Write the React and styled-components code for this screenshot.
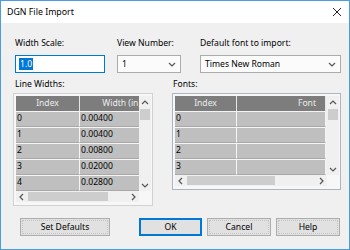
import React from 'react';
import styled, { createGlobalStyle } from 'styled-components';

const GlobalStyle = createGlobalStyle`
	html, body {
		margin: 0;
		padding: 0;
		background: #ffffff;
	}
	* {
		box-sizing: border-box;
	}
`;

const lineWidths = ['0.00400', '0.00400', '0.00800', '0.02000', '0.02800'];
const fontRows = ['0', '1', '2', '3'];

function Chevron({ dir = 'down', size = 8 }) {
	const pts = {
		down: '1,3 4,6 7,3',
		up: '1,5 4,2 7,5',
		left: '5,1 2,4 5,7',
		right: '3,1 6,4 3,7'
	}[dir];
	return (
		<svg width={size} height={size} viewBox='0 0 8 8'>
			<polyline points={pts} fill='none' stroke='#555' strokeWidth='1.2' />
		</svg>
	);
}

function App() {
	return (
		<>
			<GlobalStyle />
			<Window>
				<TitleBar>
					<Title>DGN File Import</Title>
					<svg width='10' height='10' viewBox='0 0 10 10'>
						<path d='M1 1 L9 9 M9 1 L1 9' stroke='#222' strokeWidth='1' />
					</svg>
				</TitleBar>
				<Body>
					<TopRow>
						<Field $width={90}>
							<Label>Width Scale:</Label>
							<TextInput>
								<Selected>1.0</Selected>
							</TextInput>
						</Field>
						<Field $width={64} $gap={12}>
							<Label>View Number:</Label>
							<Select>
								<span>1</span>
								<Chevron />
							</Select>
						</Field>
						<Field $width={141} $gap={19}>
							<Label>Default font to import:</Label>
							<Select>
								<span>Times New Roman</span>
								<Chevron />
							</Select>
						</Field>
					</TopRow>
					<GridRow>
						<GridColumn $width={140}>
							<Label $indent={2}>Line Widths:</Label>
							<Frame>
								<GridBody>
									<DataArea>
										<Table $cols='64px 66px'>
											<HeadCell $align='center'>Index</HeadCell>
											<HeadCell $align='right'>Width (in)</HeadCell>
											{lineWidths.map((w, i) => (
												<React.Fragment key={i}>
													<Cell>{i}</Cell>
													<Cell>{w}</Cell>
												</React.Fragment>
											))}
										</Table>
									</DataArea>
									<VScroll>
										<ArrowBox><Chevron dir='up' /></ArrowBox>
										<VThumb />
										<VTrack />
										<ArrowBox><Chevron dir='down' /></ArrowBox>
									</VScroll>
								</GridBody>
								<HScroll>
									<ArrowBox $h><Chevron dir='left' /></ArrowBox>
									<HThumb $width={80} />
									<HTrack />
									<ArrowBox $h><Chevron dir='right' /></ArrowBox>
									<Corner />
								</HScroll>
							</Frame>
						</GridColumn>
						<GridColumn $width={169} $gap={19}>
							<Label $indent={1}>Fonts:</Label>
							<Frame $accent>
								<GridBody>
									<DataArea>
										<Table $cols='62px 89px'>
											<HeadCell $align='center'>Index</HeadCell>
											<HeadCell $align='right' $pad={9}>Font</HeadCell>
											{fontRows.map((r) => (
												<React.Fragment key={r}>
													<Cell>{r}</Cell>
													<Cell />
												</React.Fragment>
											))}
										</Table>
									</DataArea>
									<VScroll>
										<ArrowBox><Chevron dir='up' /></ArrowBox>
										<VThumb />
										<VTrack />
										<ArrowBox><Chevron dir='down' /></ArrowBox>
									</VScroll>
								</GridBody>
								<HScroll>
									<ArrowBox $h><Chevron dir='left' /></ArrowBox>
									<HThumb $width={88} />
									<HTrack />
									<ArrowBox $h><Chevron dir='right' /></ArrowBox>
									<Corner />
								</HScroll>
							</Frame>
						</GridColumn>
					</GridRow>
					<ButtonRow>
						<Button $width={90} $left={7}>Set Defaults</Button>
						<Spacer />
						<Button $width={63} $primary>OK</Button>
						<Button $width={64}>Cancel</Button>
						<Button $width={64}>Help</Button>
					</ButtonRow>
				</Body>
			</Window>
		</>
	);
}

export default App;

const Window = styled.div`
	width: 350px;
	height: 250px;
	border: 1px solid #4a9ee0;
	display: flex;
	flex-direction: column;
	font-family: 'Noto Sans', sans-serif;
	font-size: 8.6px;
	color: #000;
`;

const TitleBar = styled.div`
	height: 22px;
	background: #ffffff;
	display: flex;
	align-items: center;
	justify-content: space-between;
	padding: 0 7px 0 6px;
	flex-shrink: 0;
`;

const Title = styled.span`
	font-size: 8.8px;
	color: #000;
`;

const Body = styled.div`
	flex: 1;
	background: #f0f0f0;
	padding: 13px 0 0 12px;
	display: flex;
	flex-direction: column;
`;

const TopRow = styled.div`
	display: flex;
	margin-left: 2px;
`;

const Field = styled.div`
	width: ${(p) => p.$width}px;
	margin-left: ${(p) => p.$gap || 0}px;
	display: flex;
	flex-direction: column;
`;

const Label = styled.div`
	height: 15px;
	line-height: 15px;
	padding-left: ${(p) => p.$indent || 0}px;
	margin-bottom: ${(p) => (p.$indent !== undefined ? 1 : 4)}px;
	white-space: nowrap;
`;

const TextInput = styled.div`
	height: 18px;
	background: #fff;
	border: 1px solid #0078d7;
	display: flex;
	align-items: center;
	padding-left: 3px;
`;

const Selected = styled.span`
	background: #0078d7;
	color: #fff;
	line-height: 12px;
	padding: 0 1px;
`;

const Select = styled.div`
	height: 18px;
	background: #fbfbfb;
	border: 1px solid #acacac;
	display: flex;
	align-items: center;
	justify-content: space-between;
	padding: 0 4px 0 4px;
`;

const GridRow = styled.div`
	display: flex;
	align-items: flex-start;
	margin-top: 4px;
`;

const GridColumn = styled.div`
	width: ${(p) => p.$width}px;
	margin-left: ${(p) => p.$gap || 0}px;
	display: flex;
	flex-direction: column;
`;

const Frame = styled.div`
	border: 1px solid ${(p) => (p.$accent ? '#a9b6c3' : '#d2d2d2')};
	background: #f7f7f7;
	padding: 2px 1px 3px 2px;
	display: flex;
	flex-direction: column;
`;

const GridBody = styled.div`
	display: flex;
`;

const DataArea = styled.div`
	flex: 1;
	overflow: hidden;
	background: #f0f0f0;
`;

const Table = styled.div`
	display: grid;
	grid-template-columns: ${(p) => p.$cols};
	grid-auto-rows: 16px;
	grid-template-rows: 15px;
	width: max-content;
`;

const HeadCell = styled.div`
	background: #7d7d7d;
	color: #ececec;
	text-align: ${(p) => p.$align};
	line-height: 14px;
	padding: 0 ${(p) => p.$pad || 4}px 0 4px;
	border-right: 1px solid #e6e6e6;
	white-space: nowrap;
	overflow: hidden;
`;

const Cell = styled.div`
	background: #bfbfbf;
	border-top: 1px solid #f4f4f4;
	border-right: 1px solid #f4f4f4;
	border-bottom: 1px solid #a9a9a9;
	line-height: 13px;
	padding-left: 1px;
	white-space: nowrap;
`;

const VScroll = styled.div`
	width: 12px;
	background: #f0f0f0;
	display: flex;
	flex-direction: column;
	align-items: center;
`;

const ArrowBox = styled.div`
	width: 12px;
	height: ${(p) => (p.$h ? 11 : 13)}px;
	display: flex;
	align-items: center;
	justify-content: center;
	flex-shrink: 0;
`;

const VThumb = styled.div`
	width: 10px;
	height: 11px;
	background: #cdcdcd;
	flex-shrink: 0;
`;

const VTrack = styled.div`
	flex: 1;
`;

const HScroll = styled.div`
	height: 11px;
	display: flex;
	align-items: center;
	background: #f0f0f0;
`;

const HThumb = styled.div`
	width: ${(p) => p.$width}px;
	height: 9px;
	background: #cdcdcd;
	flex-shrink: 0;
`;

const HTrack = styled.div`
	flex: 1;
`;

const Corner = styled.div`
	width: 12px;
	height: 11px;
	background: #f7f7f7;
`;

const ButtonRow = styled.div`
	display: flex;
	align-items: center;
	margin-top: 12px;
	padding-right: 9px;
	gap: 5px;
`;

const Spacer = styled.div`
	flex: 1;
`;

const Button = styled.div`
	width: ${(p) => p.$width}px;
	margin-left: ${(p) => p.$left || 0}px;
	height: 18px;
	background: #e1e1e1;
	border: 1px solid ${(p) => (p.$primary ? '#0078d7' : '#adadad')};
	box-shadow: ${(p) => (p.$primary ? 'inset 0 0 0 1px #0078d7' : 'none')};
	display: flex;
	align-items: center;
	justify-content: center;
	position: relative;
	&::after {
		content: '';
		position: absolute;
		inset: 1px;
		border: 1px dotted ${(p) => (p.$primary ? 'transparent' : '#c4c4c4')};
	}
`;
